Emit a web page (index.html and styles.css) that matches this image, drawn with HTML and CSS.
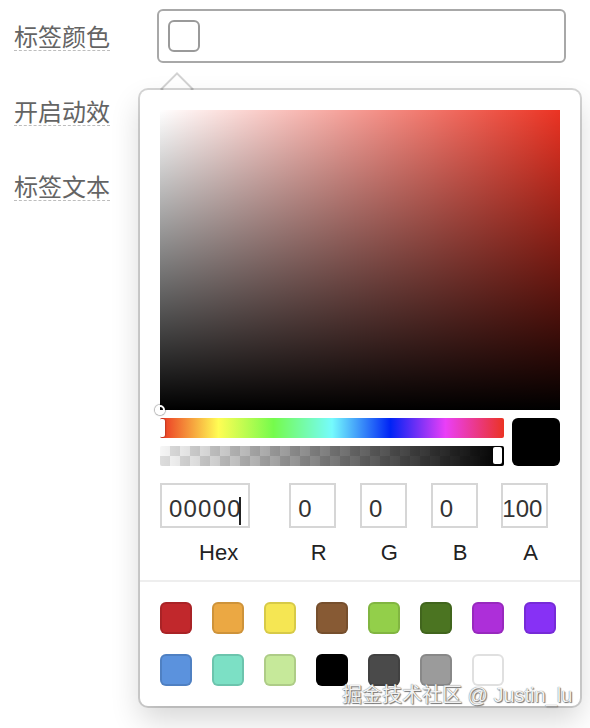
FILE: index.html
```html
<!DOCTYPE html>
<html lang="zh-CN">
<head>
<meta charset="utf-8">
<title>Color picker</title>
<link rel="stylesheet" href="styles.css">
</head>
<body>
<div class="form">
  <div class="row">
    <label class="label"><span class="label-text">标签颜色</span></label>
    <div class="field">
      <div class="trigger"><div class="trigger-swatch"></div></div>
      <div class="popover-wrap">
        <div class="arrow"></div>
        <div class="popover">
          <div class="saturation"><div class="sat-pointer"></div></div>
          <div class="controls">
            <div class="sliders">
              <div class="hue"><div class="hue-pointer"></div></div>
              <div class="alpha"><div class="alpha-pointer"></div></div>
            </div>
            <div class="preview"></div>
          </div>
          <div class="fields">
            <div class="fcol hex"><div class="inp">00000<span class="caret"></span></div><div class="flabel">Hex</div></div>
            <div class="fcol"><div class="inp">0</div><div class="flabel">R</div></div>
            <div class="fcol"><div class="inp">0</div><div class="flabel">G</div></div>
            <div class="fcol"><div class="inp">0</div><div class="flabel">B</div></div>
            <div class="fcol alpha-col"><div class="inp">100</div><div class="flabel">A</div></div>
          </div>
          <div class="swatches">
            <div class="sw c-red"></div>
            <div class="sw c-orange"></div>
            <div class="sw c-yellow"></div>
            <div class="sw c-brown"></div>
            <div class="sw c-lime"></div>
            <div class="sw c-green"></div>
            <div class="sw c-magenta"></div>
            <div class="sw c-violet"></div>
            <div class="sw c-blue"></div>
            <div class="sw c-teal"></div>
            <div class="sw c-pale"></div>
            <div class="sw c-black"></div>
            <div class="sw c-dark"></div>
            <div class="sw c-gray"></div>
            <div class="sw c-white"></div>
          </div>
        </div>
      </div>
    </div>
  </div>
  <div class="row">
    <label class="label"><span class="label-text">开启动效</span></label>
    <div class="field"></div>
  </div>
  <div class="row">
    <label class="label"><span class="label-text">标签文本</span></label>
    <div class="field"></div>
  </div>
</div>
<div class="watermark">掘金技术社区 @ Justin_lu</div>
</body>
</html>
```

FILE: styles.css
```css
html, body {
  margin: 0;
  background: #fff;
}
body {
  font-family: "Noto Sans CJK SC", "Liberation Sans", sans-serif;
  width: 590px;
  height: 728px;
  overflow: hidden;
  position: relative;
}
.form {
  padding: 9px 0 0 14px;
  display: flex;
  flex-direction: column;
  gap: 21px;
}
.row {
  display: flex;
  align-items: center;
  height: 54px;
}
.label {
  width: 143px;
  flex: none;
  font-size: 24px;
  line-height: 1;
  color: #646464;
}
.label-text {
  text-decoration: underline dashed #bdbdbd 1px;
  text-underline-offset: 4px;
}
.field {
  position: relative;
  width: 409px;
  height: 54px;
}
.trigger {
  box-sizing: border-box;
  width: 409px;
  height: 54px;
  border: 2px solid #a8a8a8;
  border-radius: 6px;
  padding: 9px;
}
.trigger-swatch {
  box-sizing: border-box;
  width: 32px;
  height: 32px;
  border: 2px solid #9a9a9a;
  border-radius: 6px;
  background: #fff;
}
.popover-wrap {
  position: absolute;
  left: -17px;
  top: 81px;
  width: 440px;
  z-index: 2;
}
.arrow {
  position: absolute;
  left: 25px;
  top: -13px;
  width: 24px;
  height: 24px;
  box-sizing: border-box;
  background: #fff;
  border: 2px solid #d2d2d2;
  transform: rotate(45deg);
}
.popover {
  position: relative;
  box-sizing: border-box;
  width: 440px;
  background: #fff;
  border-radius: 8px;
  box-shadow: 0 0 0 2px rgba(0, 0, 0, 0.16), 0 14px 30px rgba(0, 0, 0, 0.16);
  padding: 20px 20px 0;
}
.saturation {
  position: relative;
  height: 300px;
  background:
    linear-gradient(to top, #000, rgba(0, 0, 0, 0)),
    linear-gradient(to right, #fff, rgba(255, 255, 255, 0)),
    #eb3323;
}
.sat-pointer {
  position: absolute;
  left: -5px;
  bottom: -5px;
  width: 10px;
  height: 10px;
  box-sizing: border-box;
  border: 2px solid #fff;
  border-radius: 50%;
  box-shadow: 0 0 1px 1px rgba(0, 0, 0, 0.3);
}
.controls {
  display: flex;
  gap: 8px;
  margin-top: 8px;
}
.sliders {
  flex: 1;
  display: flex;
  flex-direction: column;
  gap: 8px;
}
.hue {
  position: relative;
  height: 20px;
  overflow: hidden;
  border-radius: 2px;
  background: linear-gradient(to right, #eb3323 0%, #fffd54 17%, #75fb4c 33%, #75fbfd 50%, #0023f5 67%, #ea3ff7 83%, #eb3323 100%);
}
.hue-pointer {
  position: absolute;
  left: -4px;
  top: 1px;
  width: 9px;
  height: 18px;
  background: #fff;
  border-radius: 2px;
  box-shadow: 0 0 2px rgba(0, 0, 0, 0.6);
}
.alpha {
  position: relative;
  height: 20px;
  border-radius: 2px;
  background:
    linear-gradient(to right, rgba(0, 0, 0, 0), #000),
    repeating-conic-gradient(#dddddd 0 25%, #f6f6f6 0 50%) 0 0 / 20px 20px;
}
.alpha-pointer {
  position: absolute;
  right: 2px;
  top: 1px;
  width: 9px;
  height: 17px;
  background: #fff;
  border-radius: 2px;
  box-shadow: 0 0 2px rgba(0, 0, 0, 0.6);
}
.preview {
  width: 48px;
  height: 48px;
  border-radius: 6px;
  background: #000;
}
.fields {
  display: flex;
  margin-top: 17px;
}
.fcol {
  flex: 1 1 0;
  min-width: 0;
  padding-left: 12px;
}
.fcol.hex {
  flex: 2 1 0;
  padding-left: 0;
}
.inp {
  box-sizing: border-box;
  width: 80%;
  height: 45px;
  box-shadow: inset 0 0 0 2px #d6d6d6;
  font-family: "Liberation Sans", sans-serif;
  font-size: 24px;
  line-height: 45px;
  color: #333;
  padding: 3px 0 0 9px;
  overflow: hidden;
  white-space: nowrap;
}
.hex .inp {
  width: 77%;
  letter-spacing: 1.2px;
}
.alpha-col .inp {
  padding-left: 1px;
}
.caret {
  display: inline-block;
  width: 2px;
  height: 28px;
  margin-left: -3px;
  background: #222;
  vertical-align: middle;
}
.flabel {
  margin-top: 12px;
  text-align: center;
  font-family: "Liberation Sans", sans-serif;
  font-size: 22px;
  line-height: 26px;
  color: #222;
}
.swatches {
  margin: 14px -20px 0;
  border-top: 2px solid #eeeeee;
  padding: 20px;
  display: flex;
  flex-wrap: wrap;
  gap: 20px;
}
.sw {
  width: 32px;
  height: 32px;
  border-radius: 6px;
  box-shadow: inset 0 0 0 2px rgba(0, 0, 0, 0.12);
}
.c-red { background: #c1282c; }
.c-orange { background: #eba843; }
.c-yellow { background: #f5e653; }
.c-brown { background: #875a34; }
.c-lime { background: #93cf4a; }
.c-green { background: #4b7421; }
.c-magenta { background: #ad2fd9; }
.c-violet { background: #8731f5; }
.c-blue { background: #5b92dd; }
.c-teal { background: #7ce0c5; }
.c-pale { background: #c6e99a; }
.c-black { background: #000000; }
.c-dark { background: #4a4a4a; }
.c-gray { background: #9b9b9b; }
.c-white { background: #ffffff; }
.watermark {
  position: absolute;
  left: 342px;
  top: 682px;
  z-index: 3;
  font-family: "Liberation Sans", "Noto Sans CJK SC", sans-serif;
  font-size: 20px;
  line-height: 26px;
  color: #f2f2f2;
  white-space: nowrap;
  text-shadow: 0 0 1px #555, 1px 1px 1px #777;
}
```
